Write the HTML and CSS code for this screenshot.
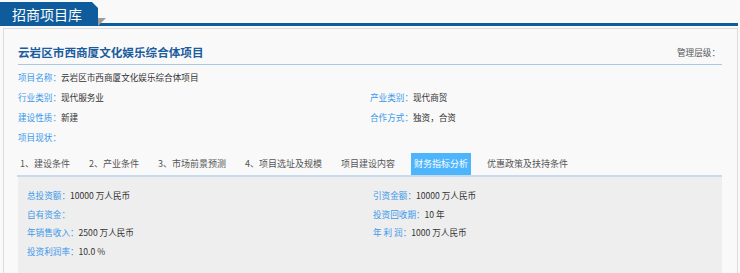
FILE: index.html
```html
<!DOCTYPE html>
<html lang="zh-CN">
<head>
  <meta charset="UTF-8">
  <title>招商项目库</title>
  <link rel="stylesheet" href="styles.css">
</head>
<body>
  <div class="page">
    <div class="top">
      <div class="top-tab">招商项目库</div>
      <div class="top-line"></div>
    </div>
    <div class="box">
      <div class="head">
        <h1>云岩区市西商厦文化娱乐综合体项目</h1>
        <span class="level">管理层级：</span>
      </div>
      <div class="info">
        <div class="item wide"><span class="lbl">项目名称：</span>云岩区市西商厦文化娱乐综合体项目</div>
        <div class="item"><span class="lbl">行业类别：</span>现代服务业</div>
        <div class="item"><span class="lbl">产业类别：</span>现代商贸</div>
        <div class="item"><span class="lbl">建设性质：</span>新建</div>
        <div class="item"><span class="lbl">合作方式：</span>独资，合资</div>
        <div class="item wide"><span class="lbl">项目现状：</span></div>
      </div>
      <ul class="tabs">
        <li>1、建设条件</li>
        <li>2、产业条件</li>
        <li>3、市场前景预测</li>
        <li>4、项目选址及规模</li>
        <li>项目建设内容</li>
        <li class="active">财务指标分析</li>
        <li>优惠政策及扶持条件</li>
      </ul>
      <div class="panel">
        <div class="item"><span class="lbl">总投资额：</span>10000 万人民币</div>
        <div class="item"><span class="lbl">引资金额：</span>10000 万人民币</div>
        <div class="item"><span class="lbl">自有资金：</span></div>
        <div class="item"><span class="lbl">投资回收期：</span>10 年</div>
        <div class="item"><span class="lbl">年销售收入：</span>2500 万人民币</div>
        <div class="item"><span class="lbl">年 利 润：</span>1000 万人民币</div>
        <div class="item"><span class="lbl">投资利润率：</span>10.0 %</div>
      </div>
    </div>
  </div>
</body>
</html>
```
FILE: styles.css
```css
body {
  margin: 0;
  padding: 0;
  background: #f9f9f9;
  font-family: "Noto Sans CJK SC", "DejaVu Sans", sans-serif;
  color: #333;
  overflow: hidden;
}
.page {
  width: 738px;
}
.top {
  display: flex;
  align-items: flex-end;
  height: 26px;
  position: relative;
}
.top-tab {
  width: 86px;
  height: 24px;
  line-height: 24px;
  padding-left: 12px;
  background: #0f5c9d;
  color: #fff;
  font-size: 14px;
  clip-path: polygon(0 0, 92px 0, 98px 6px, 98px 100%, 0 100%);
}
.top-line {
  flex: 1;
  height: 0;
  border-bottom: 3px solid #0f5c9d;
}
.top::after {
  content: "";
  position: absolute;
  left: 98px;
  top: 18px;
  border-top: 8px solid #9c9c9c;
  border-right: 8px solid transparent;
}
.box {
  margin: 2px 0 0 3px;
  border: 1px solid #dcdcdc;
  border-bottom: none;
  padding: 14px 15px 0 14px;
  background: #f9f9f9;
}
.head {
  display: flex;
  justify-content: space-between;
  align-items: center;
  padding-bottom: 3px;
  border-bottom: 1px solid #a9c8e8;
}
.head h1 {
  margin: 0;
  font-size: 11.6px;
  line-height: 18px;
  font-weight: bold;
  color: #1b5c9e;
}
.level {
  font-size: 8.6px;
  color: #555;
  padding-right: 2px;
}
.info {
  display: grid;
  grid-template-columns: 352px 1fr;
  margin-top: 2px;
}
.item {
  font-size: 8.6px;
  line-height: 20px;
  white-space: pre;
}
.item.wide {
  grid-column: 1 / 3;
}
.lbl {
  color: #3a98ec;
}
.tabs {
  display: flex;
  gap: 13px;
  list-style: none;
  margin: 6px 0 0 -1px;
  padding: 0;
  border-bottom: 2px solid #c6dbef;
}
.tabs li {
  font-size: 9px;
  line-height: 22px;
  padding: 0 3px;
  color: #555;
}
.tabs li.active {
  background: #4db5fb;
  color: #fff;
}
.panel {
  display: grid;
  grid-template-columns: 346px 1fr;
  padding: 9px 9px 40px;
  background: #eeeeee;
}
.panel .item {
  line-height: 18.5px;
}
```
